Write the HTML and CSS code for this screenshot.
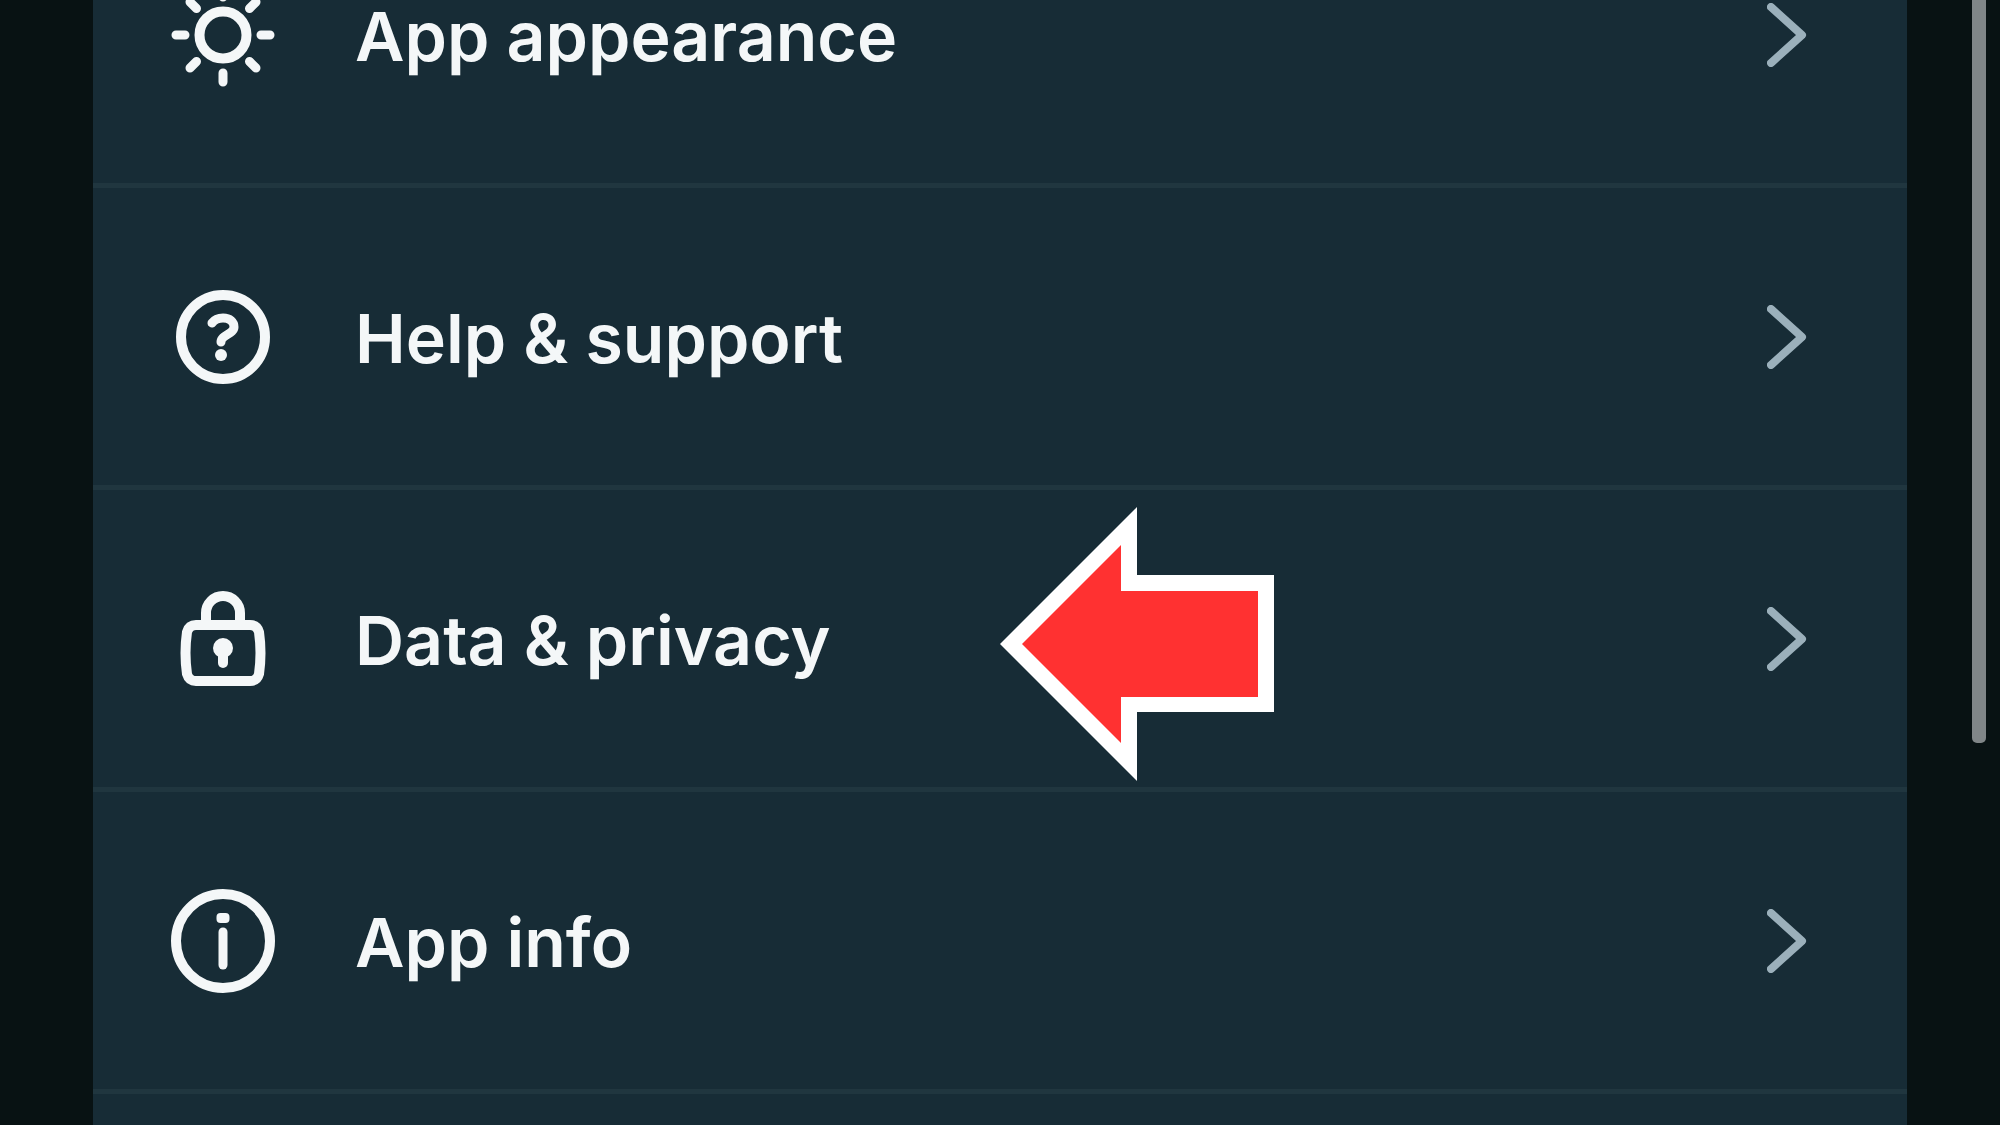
FILE: index.html
```html
<!DOCTYPE html>
<html lang="en">
<head>
  <meta charset="UTF-8">
  <meta name="viewport" content="width=device-width, initial-scale=1.0">
  <title>Settings</title>
  <link rel="stylesheet" href="styles.css">
</head>
<body>
  <main class="settings">
    <nav class="menu" aria-label="Settings">
      <a class="menu-item" href="#appearance">
        <svg class="menu-icon" viewBox="-52 -52 104 104" aria-hidden="true">
          <circle r="23.5"/>
          <path class="thin" d="M-47 0h9M38 0h9M0-47v9M0 38v9M-33-33l6.5 6.5M26.5 26.5l6.5 6.5M-33 33l6.5-6.5M26.5-26.5l6.5-6.5"/>
        </svg>
        <span class="menu-label">App appearance</span>
        <svg class="chevron" viewBox="0 0 40 64" aria-hidden="true"><path d="M4 4l31 28L4 60"/></svg>
      </a>

      <a class="menu-item" href="#help">
        <svg class="menu-icon" viewBox="-52 -52 104 104" aria-hidden="true">
          <circle r="42"/>
          <path class="thin" d="M-11-14C-8-18-4-19 0-19C7-19 11-15 11-10C11-3-2-2-2 5"/>
          <circle class="solid" cx="-2" cy="18" r="6"/>
        </svg>
        <span class="menu-label">Help &amp; support</span>
        <svg class="chevron" viewBox="0 0 40 64" aria-hidden="true"><path d="M4 4l31 28L4 60"/></svg>
      </a>

      <a class="menu-item" href="#privacy">
        <svg class="menu-icon" viewBox="-52 -52 104 104" aria-hidden="true">
          <path d="M-27-14H27Q34-14 36-7Q39 14 36 35Q34 42 27 42H-27Q-34 42-36 35Q-39 14-36-7Q-34-14-27-14Z"/>
          <path d="M-17-15V-26A17 17 0 0 1 17-26V-15"/>
          <circle class="solid" cy="9" r="10"/>
          <path d="M0 12V24"/>
        </svg>
        <span class="menu-label">Data &amp; privacy</span>
        <svg class="chevron" viewBox="0 0 40 64" aria-hidden="true"><path d="M4 4l31 28L4 60"/></svg>
        <svg class="pointer" viewBox="0 0 274 274" aria-hidden="true">
          <path fill="#fff" d="M0 137L137 0V68H274V205H137V274Z"/>
          <path fill="#ff3131" d="M22 137L121 38V84H258V190H121V236Z"/>
        </svg>
      </a>

      <a class="menu-item" href="#info">
        <svg class="menu-icon" viewBox="-52 -52 104 104" aria-hidden="true">
          <circle r="47"/>
          <rect class="solid" x="-6.5" y="-28" width="13" height="10" rx="4"/>
          <path class="thin" d="M0-9V24"/>
        </svg>
        <span class="menu-label">App info</span>
        <svg class="chevron" viewBox="0 0 40 64" aria-hidden="true"><path d="M4 4l31 28L4 60"/></svg>
      </a>
    </nav>
  </main>
  <div class="scroll-thumb"></div>
</body>
</html>
```
FILE: styles.css
```css
:root {
  --bg: #081213;
  --card: #172c36;
  --line: #20363f;
  --text: #f4f7f8;
  --muted: #9bb0bb;
  --thumb: #808688;
}

* {
  margin: 0;
  padding: 0;
  box-sizing: border-box;
}

body {
  background: var(--bg);
  color: var(--text);
  font-family: Inter, Roboto, sans-serif;
  height: 100vh;
  overflow: hidden;
}

.settings {
  min-height: 100vh;
  margin: 0 93px;
  background: var(--card);
  overflow: hidden;
}

/* list is scrolled, first item is partly out of view */
.menu {
  margin-top: -114px;
}

.menu-item {
  position: relative;
  display: flex;
  align-items: center;
  gap: 80px;
  min-height: 302px;
  padding: 1px 100px 0 78px;
  border-bottom: 5px solid var(--line);
  color: inherit;
  text-decoration: none;
}

.menu-icon {
  flex: none;
  width: 104px;
  height: 104px;
  fill: none;
  stroke: var(--text);
  stroke-width: 10;
  stroke-linecap: round;
  stroke-linejoin: round;
}

.menu-icon .thin {
  stroke-width: 9;
}

.menu-icon .solid {
  fill: var(--text);
  stroke: none;
}

.menu-label {
  flex: 1;
  padding-top: 2px;
  font-size: 68px;
  font-weight: 600;
  line-height: 68px;
}

.chevron {
  flex: none;
  width: 40px;
  height: 64px;
  fill: none;
  stroke: var(--muted);
  stroke-width: 8;
  stroke-linecap: round;
  stroke-linejoin: round;
}

.pointer {
  position: absolute;
  top: 17px;
  left: 50%;
  width: 274px;
  height: 274px;
}

.scroll-thumb {
  position: absolute;
  top: 0;
  right: 14px;
  width: 14px;
  height: 66vh;
  border-radius: 0 0 5px 5px;
  background: var(--thumb);
}
```
